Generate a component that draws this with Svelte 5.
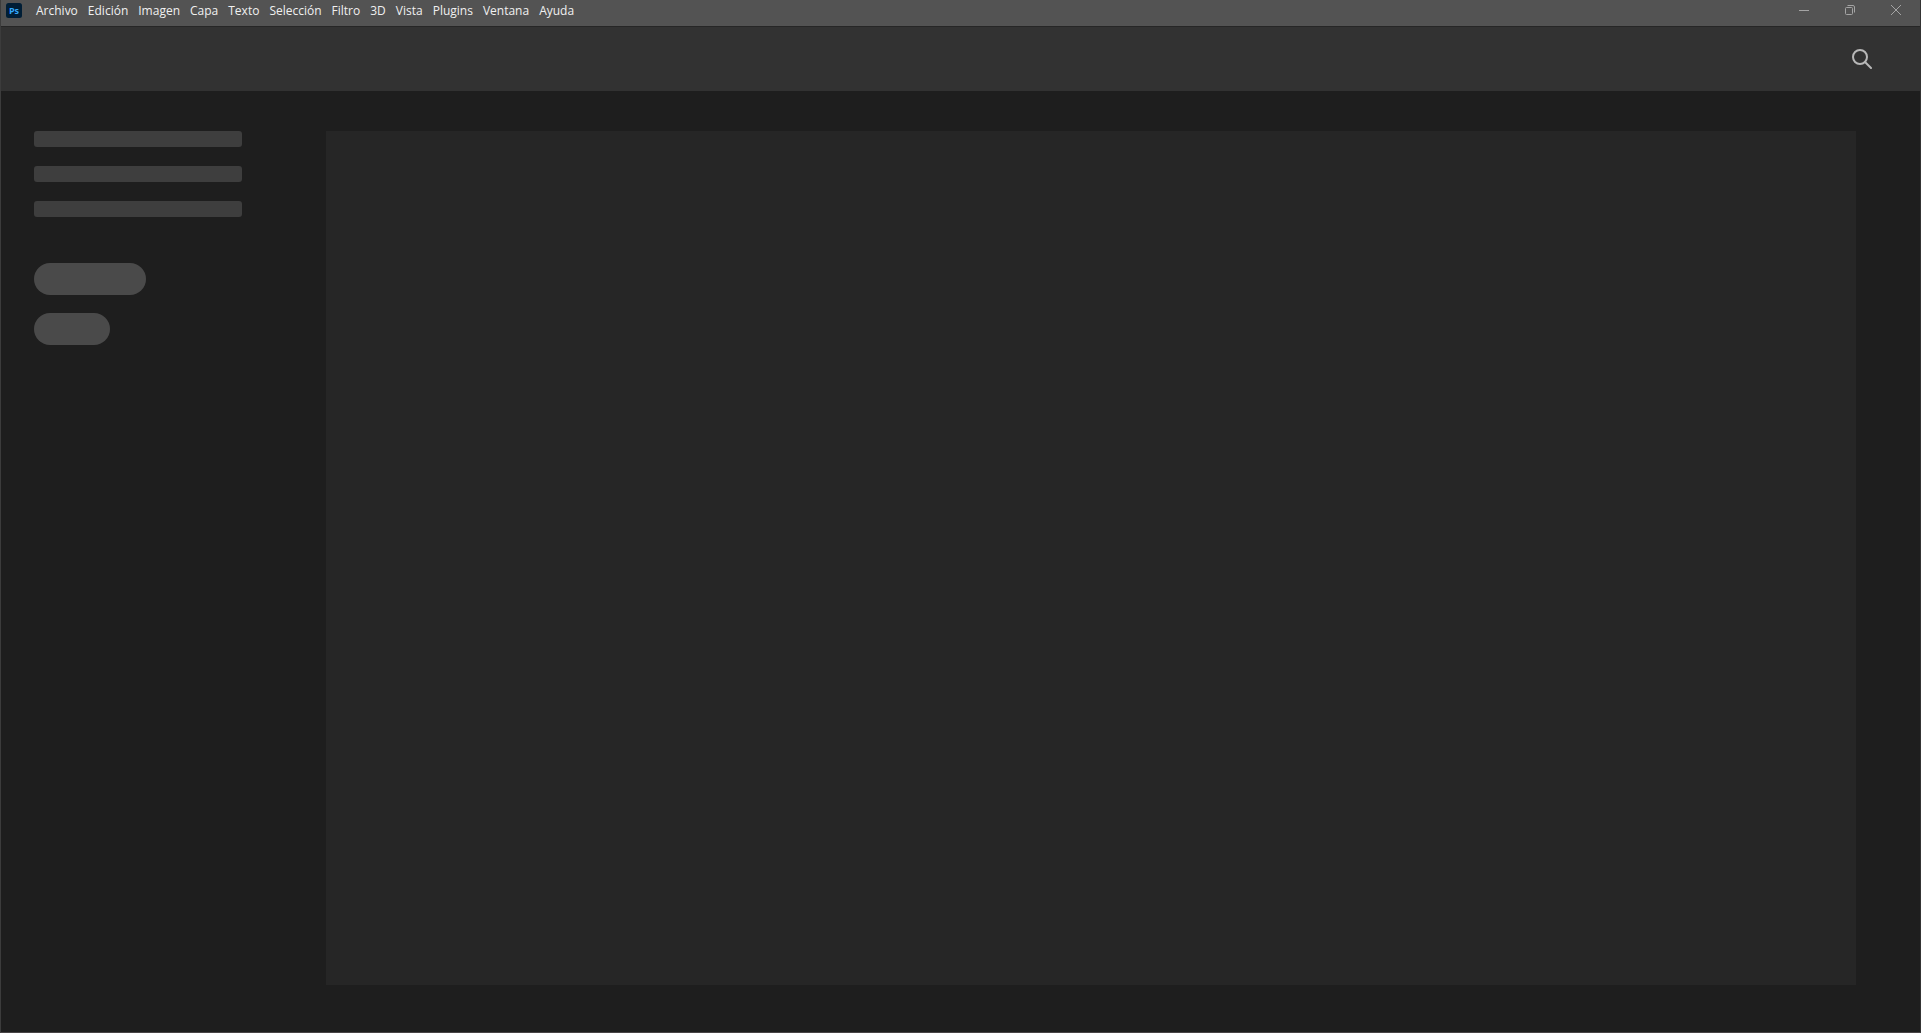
<script lang="ts">
  const menus = [
    'Archivo',
    'Edición',
    'Imagen',
    'Capa',
    'Texto',
    'Selección',
    'Filtro',
    '3D',
    'Vista',
    'Plugins',
    'Ventana',
    'Ayuda',
  ];
</script>

<div class="window">
  <header class="titlebar">
    <svg class="logo" viewBox="0 0 16 15" role="img" aria-label="Photoshop">
      <rect width="16" height="15" rx="2.5" fill="#001e36" />
      <text x="8" y="11" text-anchor="middle">Ps</text>
    </svg>

    <nav class="menubar" aria-label="Menú principal">
      {#each menus as menu}
        <button type="button">{menu}</button>
      {/each}
    </nav>

    <div class="controls">
      <button type="button" aria-label="Minimizar">
        <svg viewBox="0 0 12 12"><path d="M1 6.5h10" /></svg>
      </button>
      <button type="button" aria-label="Restaurar">
        <svg viewBox="0 0 12 12">
          <rect x="1.5" y="3.5" width="7" height="7" rx="1" />
          <path d="M3.5 1.5H9A1.5 1.5 0 0 1 10.5 3v5.5" />
        </svg>
      </button>
      <button type="button" aria-label="Cerrar">
        <svg viewBox="0 0 12 12"><path d="M1 1l10 10M11 1L1 11" /></svg>
      </button>
    </div>
  </header>

  <div class="toolbar">
    <button type="button" class="search" aria-label="Buscar">
      <svg viewBox="0 0 20 20">
        <circle cx="8" cy="8" r="7" />
        <path d="M13 13l6 6" />
      </svg>
    </button>
  </div>

  <div class="home">
    <aside class="sidebar">
      <div class="lines">
        <div class="line"></div>
        <div class="line"></div>
        <div class="line"></div>
      </div>
      <div class="pills">
        <div class="pill"></div>
        <div class="pill short"></div>
      </div>
    </aside>
    <main class="content"></main>
  </div>
</div>

<style>
  :global(body) {
    margin: 0;
    background: #1e1e1e;
  }

  .window {
    box-sizing: border-box;
    min-height: 100vh;
    display: flex;
    flex-direction: column;
    border-left: 1px solid #3c3c3c;
    border-right: 1px solid #343434;
    border-bottom: 1px solid #484446;
    background: #1e1e1e;
    font-family: 'Open Sans', 'Noto Sans', sans-serif;
  }

  button {
    margin: 0;
    padding: 0;
    border: 0;
    background: none;
    color: inherit;
    font: inherit;
  }

  .titlebar {
    display: flex;
    align-items: flex-start;
    height: 26px;
    padding: 0 1px 0 5px;
    background: #535353;
    border-bottom: 1px solid #262626;
    color: #f0f0f0;
  }

  .logo {
    width: 16px;
    height: 15px;
    margin-top: 3px;
  }

  .logo text {
    fill: #31a8ff;
    font-size: 9px;
    font-weight: 700;
  }

  .menubar {
    display: flex;
    gap: 10px;
    margin-left: 14px;
    font-size: 12px;
    line-height: 22px;
  }

  .controls {
    display: flex;
    margin-left: auto;
    color: #a4a4a4;
  }

  .controls button {
    display: grid;
    place-items: center;
    width: 46px;
    height: 20px;
  }

  .controls svg {
    width: 12px;
    height: 12px;
    fill: none;
    stroke: currentColor;
  }

  .toolbar {
    display: flex;
    align-items: center;
    justify-content: flex-end;
    height: 64px;
    padding-right: 48px;
    background: #323232;
  }

  .search {
    width: 20px;
    height: 20px;
    color: #b8b8b8;
  }

  .search svg {
    display: block;
    fill: none;
    stroke: currentColor;
    stroke-width: 2;
    stroke-linecap: round;
  }

  .home {
    flex: 1;
    display: flex;
    gap: 84px;
    padding: 40px 64px 47px 33px;
  }

  .sidebar {
    flex: none;
    width: 208px;
  }

  .lines {
    display: grid;
    gap: 19px;
  }

  .line {
    height: 16px;
    border-radius: 3px;
    background: #3e3e3e;
  }

  .pills {
    display: grid;
    gap: 18px;
    margin-top: 46px;
  }

  .pill {
    width: 112px;
    height: 32px;
    border-radius: 16px;
    background: #4a4a4a;
  }

  .pill.short {
    width: 76px;
  }

  .content {
    flex: 1;
    background: #262626;
  }
</style>
